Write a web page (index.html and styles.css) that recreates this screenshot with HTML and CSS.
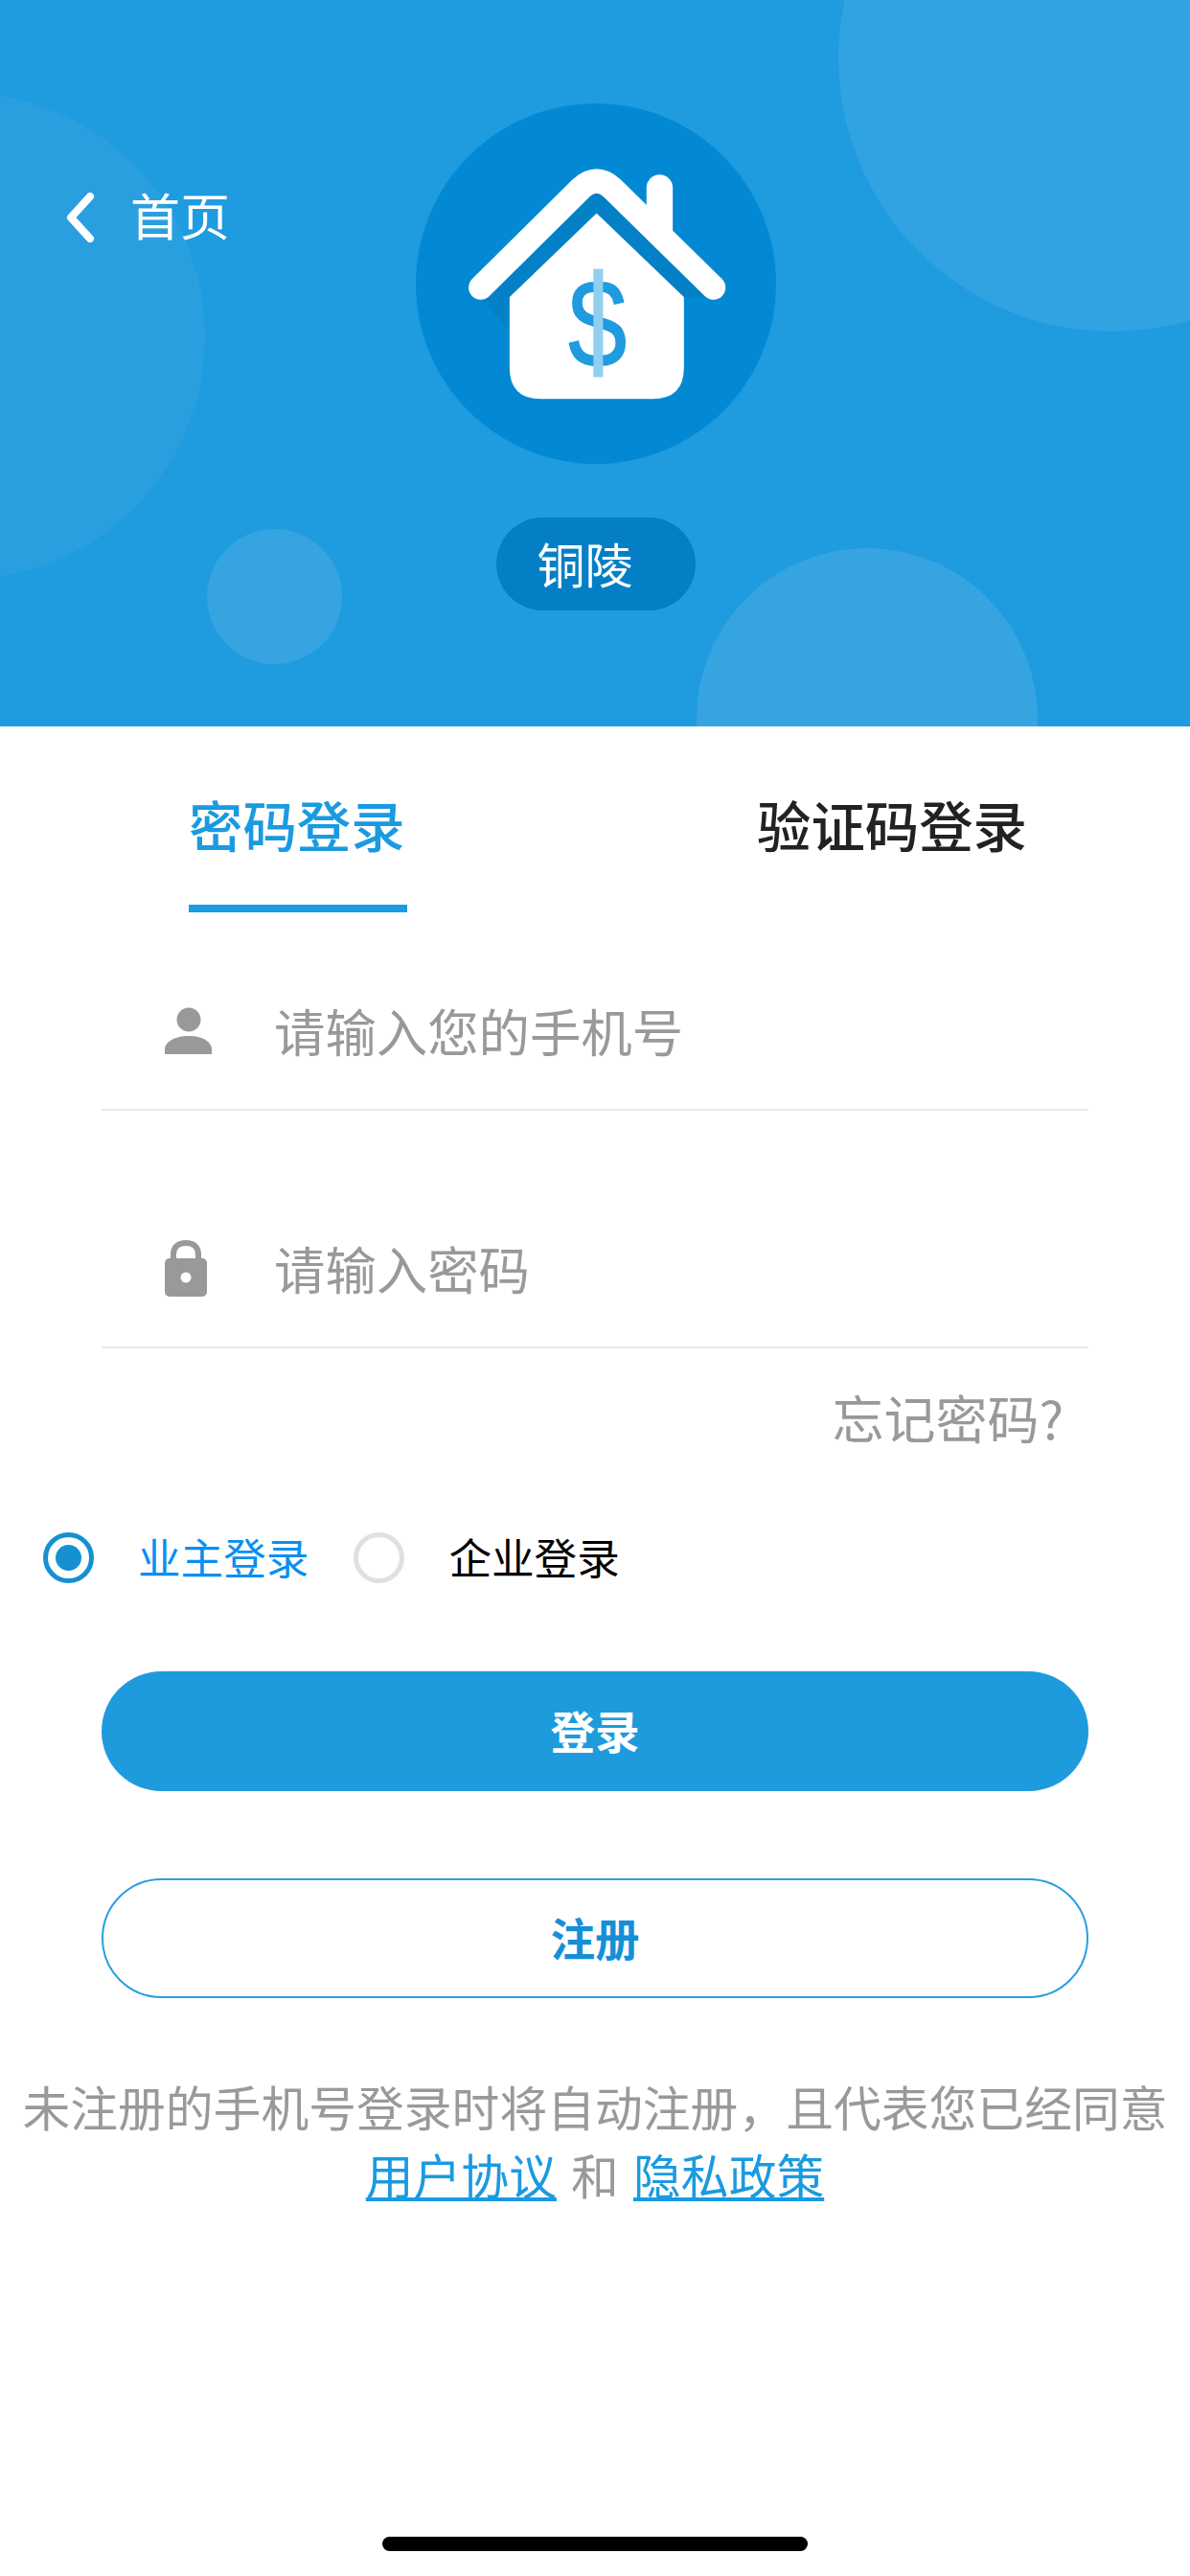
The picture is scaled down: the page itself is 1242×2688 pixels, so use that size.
FILE: index.html
```html
<!DOCTYPE html>
<html>
  <head>
    <title>登录</title>
    <link rel="stylesheet" href="styles.css">
  </head>
  <body>
    <div class="header">
      <div class="bubble bubble-right"></div>
      <div class="bubble bubble-left"></div>
      <div class="bubble bubble-small"></div>
      <div class="bubble bubble-bottom"></div>

      <div class="back">
        <svg class="back-icon" viewBox="0 0 32 52">
          <path d="M26 4 L6 26 L26 48" fill="none" stroke="#fff" stroke-width="8" stroke-linecap="round" stroke-linejoin="round"/>
        </svg>
        <span>首页</span>
      </div>

      <div class="logo-wrap">
        <svg class="logo" viewBox="40 25 1126 1126">
          <circle cx="603" cy="588" r="563" fill="#0389d4"/>
          <polygon points="240,632 333,735 878,630 950,632 605,290" fill="#0480c6"/>
          <path d="M605 368 L878 630 V850 Q878 948 780 948 H430 Q333 948 333 850 V630 Z" fill="#fff"/>
          <path d="M802 288 V430" stroke="#fff" stroke-width="82" stroke-linecap="round" fill="none"/>
          <path d="M243 600 L556 290 Q605 245 654 290 L970 600" stroke="#fff" stroke-width="76" stroke-linecap="round" stroke-linejoin="round" fill="none"/>
          <text class="logo-dollar" transform="translate(608 850) scale(.84 1)" text-anchor="middle">$</text>
          <rect x="595" y="542" width="30" height="338" fill="#90cff0"/>
        </svg>
      </div>

      <div class="city-wrap">
        <div class="city">铜陵</div>
      </div>
    </div>

    <div class="tabs">
      <div class="tab tab-active">密码登录</div>
      <div class="tab">验证码登录</div>
    </div>

    <div class="form">
      <div class="field">
        <svg class="field-icon" viewBox="0 0 52 50">
          <circle cx="26" cy="13" r="12.5" fill="#999"/>
          <path d="M1 49 V44 C1 36 12 30 26 30 C40 30 50 36 50 44 V49 Z" fill="#999"/>
        </svg>
        <span class="placeholder">请输入您的手机号</span>
      </div>
      <div class="field">
        <svg class="field-icon" viewBox="0 0 52 60">
          <path d="M10 24 V15 C10 7 15 3 23 3 C31 3 36 7 36 15 V24" fill="none" stroke="#999" stroke-width="6"/>
          <rect x="1" y="19" width="44" height="40" rx="5" fill="#999"/>
          <circle cx="23" cy="39" r="5.5" fill="#fff"/>
        </svg>
        <span class="placeholder">请输入密码</span>
      </div>
      <div class="forgot">忘记密码?</div>
    </div>

    <div class="roles">
      <div class="radio radio-on"><div class="radio-dot"></div></div>
      <span class="role-label role-on">业主登录</span>
      <div class="radio"></div>
      <span class="role-label">企业登录</span>
    </div>

    <div class="buttons">
      <button class="button button-login">登录</button>
      <button class="button button-register">注册</button>
    </div>

    <div class="agreement">
      <div>未注册的手机号登录时将自动注册，且代表您已经同意</div>
      <div class="agreement-links"><a class="link">用户协议</a> 和 <a class="link">隐私政策</a></div>
    </div>

    <div class="home-bar"></div>
  </body>
</html>
```

FILE: styles.css
```css
body{
  margin: 0;
  height: 2688px;
  overflow: hidden;
  background-color: #fff;
  font-family: "Noto Sans CJK SC", sans-serif;
}

.header{
  position: relative;
  height: 758px;
  overflow: hidden;
  background-color: #1f9bdf;
  padding-top: 108px;
  box-sizing: border-box;
}
.bubble{
  position: absolute;
  border-radius: 50%;
  background-color: #31a2e2;
}
.bubble-right{
  left: 875px;
  top: -226px;
  width: 572px;
  height: 572px;
}
.bubble-left{
  left: -294px;
  top: 97px;
  width: 508px;
  height: 508px;
  background-color: #2a9fe0;
}
.bubble-small{
  left: 216px;
  top: 552px;
  width: 141px;
  height: 141px;
  background-color: #36a4e1;
}
.bubble-bottom{
  left: 727px;
  top: 572px;
  width: 356px;
  height: 356px;
  background-color: #36a4e1;
}

.back{
  position: absolute;
  left: 68px;
  top: 186px;
  display: flex;
  align-items: center;
  gap: 36px;
  color: #fff;
  font-size: 52px;
  line-height: 76px;
}
.back span{
  padding-bottom: 6px;
}
.back-icon{
  width: 32px;
  height: 52px;
}

.logo-wrap{
  position: relative;
  display: flex;
  justify-content: center;
  padding-left: 1px;
}
.logo{
  width: 376px;
  height: 376px;
  display: block;
}
.logo-dollar{
  font-family: "Liberation Sans", sans-serif;
  font-size: 390px;
  fill: #1f9bdf;
  stroke: #1f9bdf;
  stroke-width: 5px;
}
.city-wrap{
  position: relative;
  display: flex;
  justify-content: center;
  margin-top: 56px;
  padding-left: 1px;
}
.city{
  width: 208px;
  height: 97px;
  box-sizing: border-box;
  padding-left: 43px;
  border-radius: 49px;
  background-color: #047fc6;
  color: #fff;
  font-size: 50px;
  line-height: 95px;
}

.tabs{
  display: flex;
  padding: 62px 0 0 197px;
}
.tab{
  font-size: 56.4px;
  font-weight: 500;
  line-height: 80px;
  padding-bottom: 44px;
  border-bottom: 8px solid transparent;
  color: #222;
}
.tab-active{
  width: 228px;
  margin-right: 365px;
  color: #1a9ae0;
  border-bottom-color: #1a9ae0;
  white-space: nowrap;
}

.form{
  margin: 43px 106px 0 106px;
}
.field{
  display: flex;
  align-items: center;
  height: 162px;
  margin-bottom: 84px;
  border-bottom: 2px solid #e8e8e8;
}
.field:nth-child(2){
  margin-bottom: 0;
}
.field-icon{
  width: 52px;
  height: 60px;
  margin-left: 65px;
  margin-right: 63px;
}
.placeholder{
  font-size: 53.4px;
  padding-bottom: 4px;
  color: #999;
}
.forgot{
  margin-top: 37px;
  padding-right: 26px;
  text-align: right;
  font-size: 54px;
  line-height: 70px;
  color: #999;
}

.roles{
  display: flex;
  align-items: center;
  height: 53px;
  margin-top: 85px;
  padding-left: 45px;
}
.radio{
  width: 53px;
  height: 53px;
  box-sizing: border-box;
  border: 5px solid #e0e0e0;
  border-radius: 50%;
  display: flex;
  align-items: center;
  justify-content: center;
}
.radio-on{
  border-color: #1590d0;
}
.radio-dot{
  width: 27px;
  height: 27px;
  border-radius: 50%;
  background-color: #1590d0;
}
.role-label{
  font-size: 44.6px;
  line-height: 50px;
  padding-bottom: 3px;
  margin-left: 46px;
  color: #000;
}
.role-on{
  color: #0a8ff0;
  margin-right: 47px;
}

.buttons{
  display: flex;
  flex-direction: column;
  gap: 91px;
  margin: 92px 106px 0 106px;
}
.button{
  height: 125px;
  padding: 0 0 5px 0;
  border-radius: 63px;
  font-family: inherit;
  font-size: 46.6px;
  font-weight: bold;
}
.button-login{
  background-color: #1e9bdd;
  border: none;
  color: #fff;
}
.button-register{
  background-color: #fff;
  border: 2px solid #2a9fe0;
  color: #1590d8;
}

.agreement{
  margin-top: 77px;
  text-align: center;
  font-size: 49.8px;
  line-height: 71px;
  color: #999;
  white-space: nowrap;
}
.agreement-links{
  word-spacing: 4px;
}
.link{
  color: #1a9ae0;
  text-decoration: underline;
}

.home-bar{
  width: 444px;
  height: 15px;
  margin: 343px auto 0 auto;
  border-radius: 8px;
  background-color: #000;
}
```
